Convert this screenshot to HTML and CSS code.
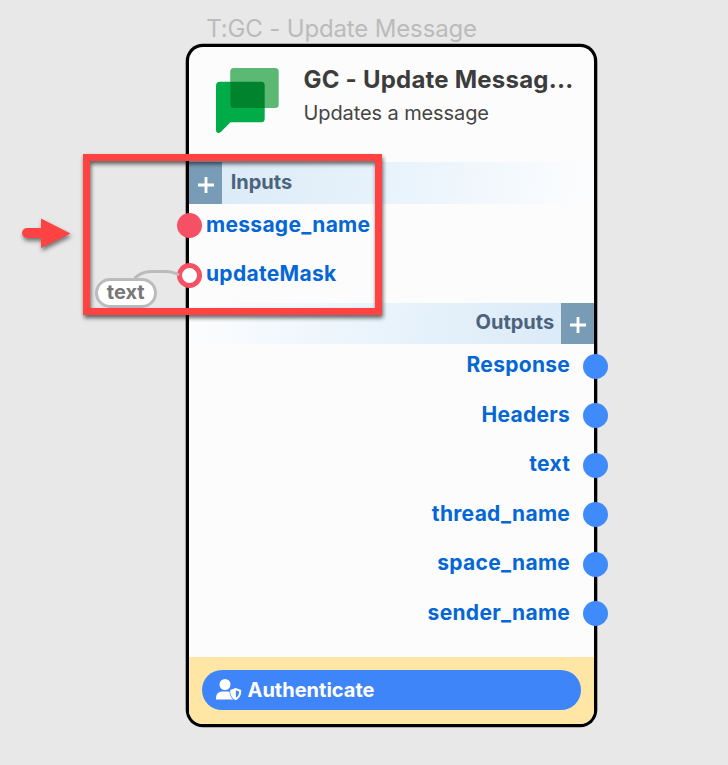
FILE: index.html
```html
<!DOCTYPE html>
<html lang="en">
<head>
<meta charset="utf-8">
<title>GC - Update Message</title>
<link rel="stylesheet" href="styles.css">
</head>
<body>
<main class="canvas">
  <div class="node-label">T:GC - Update Message</div>
  <section class="card">
    <header class="head">
      <svg class="logo" width="64" height="66" viewBox="0 0 64 66">
        <path d="M4 13.800H45.200a3.500 3.500 0 0 1 3.500 3.500V50.800a3.500 3.500 0 0 1-3.500 3.500H14.500L4.500 64.200Q2 66 .3 63.800L0 62.500V17.800a4 4 0 0 1 4-4z" fill="#00ac47"/>
        <rect x="14.200" y="0" width="48.500" height="40" rx="3.500" fill="#5bb974"/>
        <path d="M14.200 13.800h31a3.500 3.500 0 0 1 3.500 3.500V40h-31a3.500 3.500 0 0 1-3.500-3.500z" fill="#00832d"/>
      </svg>
      <div class="titles">
        <h1>GC - Update Messag...</h1>
        <p>Updates a message</p>
      </div>
    </header>
    <div class="bar bar-in">
      <span class="plus"><svg width="16" height="16" viewBox="0 0 16 16"><path d="M0 8H16M8 0V16"/></svg></span>
      <span class="bar-title">Inputs</span>
    </div>
    <div class="inputs">
      <div class="row in"><i class="port red"></i><span>message_name</span></div>
      <div class="row in"><i class="port ring"></i><span>updateMask</span></div>
    </div>
    <div class="bar bar-out">
      <span class="bar-title">Outputs</span>
      <span class="plus"><svg width="16" height="16" viewBox="0 0 16 16"><path d="M0 8H16M8 0V16"/></svg></span>
    </div>
    <div class="outputs">
      <div class="row out"><span>Response</span><i class="port"></i></div>
      <div class="row out"><span>Headers</span><i class="port"></i></div>
      <div class="row out"><span>text</span><i class="port"></i></div>
      <div class="row out"><span>thread_name</span><i class="port"></i></div>
      <div class="row out"><span>space_name</span><i class="port"></i></div>
      <div class="row out"><span>sender_name</span><i class="port"></i></div>
    </div>
    <footer class="foot">
      <div class="auth">
        <svg width="26" height="22" viewBox="0 0 26 22">
          <circle cx="9" cy="5.500" r="5.500" fill="#fff"/>
          <path d="M0 20.500V18.500Q.4 12.600 6.200 12.400H12Q15 12.500 16.500 14.500L19 20.500z" fill="#fff"/>
          <path d="M19.700 8.900l5.500 2.200c.3 5-1.700 8.300-5.500 10.200-3.800-1.900-5.800-5.200-5.500-10.200z" fill="#fff" stroke="#3f85fa" stroke-width="1.400" paint-order="stroke"/>
          <path d="M19.900 11.300l3.200 1.300c0 2.900-1 4.800-3.200 6.200z" fill="#3f85fa"/>
        </svg>
        <span>Authenticate</span>
      </div>
    </footer>
  </section>
  <svg class="wire" width="56" height="20" viewBox="0 0 56 20"><path d="M0 14Q7 6.500 17 6.500H31Q39 6.500 45 10"/></svg>
  <div class="bubble">text</div>
  <div class="highlight"></div>
  <svg class="arrow" width="60" height="44" viewBox="0 0 60 44"><path d="M9 11H23V1.500L52.500 16.500 23 31V21H9a5 5 0 0 1 0-10z"/></svg>
</main>
</body>
</html>
```
FILE: styles.css
```css
* { box-sizing: border-box; }
body {
  margin: 0;
  background: #e8e8e8;
  font-family: Inter, "Liberation Sans", sans-serif;
}
.canvas {
  position: relative;
  width: 728px;
  height: 765px;
  padding: 12px 0 0 188.700px;
  overflow: hidden;
}
.node-label {
  height: 35px;
  padding-left: 17.500px;
  font-size: 24px;
  line-height: 33px;
  letter-spacing: -.15px;
  color: #bbb;
  white-space: nowrap;
}
.card {
  width: 405.500px;
  height: 676.500px;
  display: flex;
  flex-direction: column;
  background: #fcfcfc;
  border-radius: 14px;
  box-shadow: 0 0 0 3.300px #000;
}
.head {
  display: flex;
  height: 115.300px;
  padding: 20.500px 0 0 27.300px;
}
.logo { flex: none; }
.titles { margin-left: 23.500px; white-space: nowrap; }
h1 {
  margin: -4px 0 0;
  font-size: 24px;
  line-height: 32px;
  font-weight: 700;
  letter-spacing: .22px;
  color: #3c3c3c;
}
p {
  margin: 3px 0 0;
  font-size: 20px;
  line-height: 28px;
  letter-spacing: -.1px;
  color: #444;
}
.bar { display: flex; height: 41.500px; flex: none; }
.bar-in { background: linear-gradient(100deg, #d8e9f6, #eaf4fc 55%, #fdfdfe); }
.bar-out {
  justify-content: flex-end;
  background: linear-gradient(100deg, #fdfdfe, #eaf4fc 45%, #d8e9f6);
}
.plus {
  display: grid;
  place-items: center;
  width: 33px;
  height: 100%;
  padding: 3px 0 0 1px;
  background: #789bb6;
}
.plus path { stroke: #fff; stroke-width: 2.800; }
.bar-title {
  padding: 0 8px 0 9px;
  font-size: 20px;
  line-height: 40px;
  font-weight: 700;
  color: #4c637d;
}
.bar-out .bar-title { padding-right: 7px; line-height: 38px; }
.inputs { height: 99px; padding-top: 9.700px; }
.outputs { height: 312.700px; padding-top: 9.500px; }
.row {
  display: flex;
  align-items: center;
  height: 25px;
  margin-bottom: 24.500px;
  font-size: 21px;
  line-height: 25px;
  font-weight: 700;
  letter-spacing: .3px;
  color: #0567d5;
}
.row span { margin-top: -3.600px; }
.in { margin-left: -11.500px; gap: 3.800px; }
.in:first-child span { margin-top: -2.600px; }
.out { justify-content: flex-end; margin-right: -13.700px; gap: 12.700px; }
.port {
  flex: none;
  width: 25px;
  height: 25px;
  border-radius: 50%;
  background: #3f8bfc;
}
.red { background: #f55064; }
.ring { background: #fff; border: 5px solid #f55064; }
.foot {
  flex: 1;
  padding: 13.200px 13.300px;
  background: #ffe6a5;
  border-radius: 0 0 14px 14px;
}
.auth {
  display: flex;
  align-items: center;
  gap: 5.500px;
  height: 39.500px;
  padding-left: 14px;
  border-radius: 20px;
  background: #3f85fa;
  color: #fff;
  font-size: 20px;
  font-weight: 700;
}
.wire {
  position: absolute;
  left: 134px;
  top: 265px;
  fill: none;
  stroke: #bbb;
  stroke-width: 3;
}
.bubble {
  position: absolute;
  left: 94.500px;
  top: 278px;
  width: 62.500px;
  height: 29.500px;
  border: 3px solid #bbb;
  border-radius: 15px;
  background: #fff;
  color: #777;
  font-size: 20px;
  line-height: 22px;
  font-weight: 700;
  text-align: center;
}
.highlight {
  position: absolute;
  left: 83px;
  top: 154px;
  width: 299px;
  height: 161px;
  border: 7px solid #ff4343;
  filter: drop-shadow(1px 3px 2px rgba(0, 0, 0, .6));
}
.arrow {
  position: absolute;
  left: 18px;
  top: 217px;
  fill: #ff4343;
  filter: drop-shadow(1px 3px 2px rgba(0, 0, 0, .5));
}
```
